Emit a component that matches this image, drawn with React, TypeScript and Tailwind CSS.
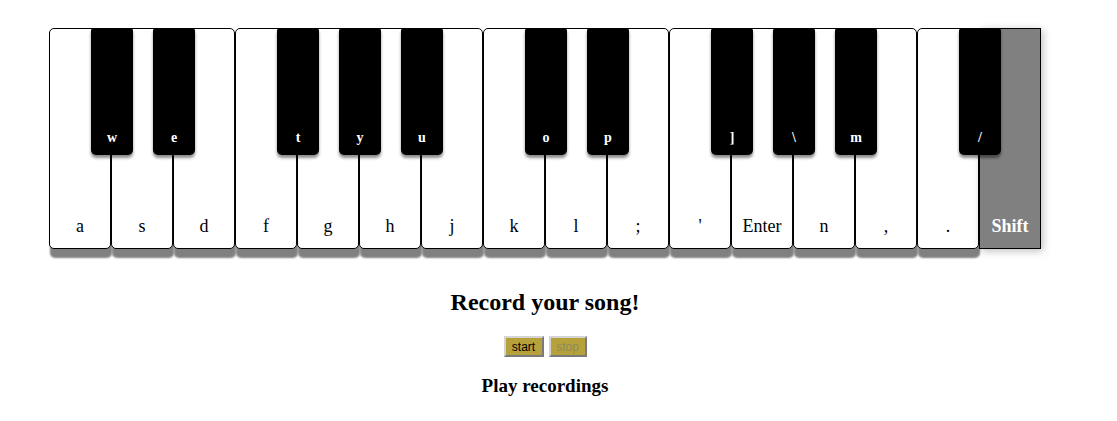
import React from 'react';

const KEY_W = 62;

const whiteKeys = ['a', 's', 'd', 'f', 'g', 'h', 'j', 'k', 'l', ';', "'", 'Enter', 'n', ',', '.'];

// black keys sit on the boundary between white key (index - 1) and index
const blackKeys: { label: string; at: number }[] = [
  { label: 'w', at: 1 },
  { label: 'e', at: 2 },
  { label: 't', at: 4 },
  { label: 'y', at: 5 },
  { label: 'u', at: 6 },
  { label: 'o', at: 8 },
  { label: 'p', at: 9 },
  { label: ']', at: 11 },
  { label: '\\', at: 12 },
  { label: 'm', at: 13 },
  { label: '/', at: 15 },
];

const App: React.FC = () => {
  return (
    <div className="min-h-screen bg-white font-['Liberation_Serif',serif] text-black">
      <div className="ml-[49px] w-[992px] pt-[28px]">
        {/* Keyboard */}
        <div className="relative flex h-[221px]">
          {whiteKeys.map((k) => (
            <div
              key={k}
              className="flex h-[221px] w-[62px] shrink-0 items-end justify-center rounded-[5px] border border-black bg-white pb-[13px] text-[18px] leading-none shadow-[1px_9px_2px_#808080]"
            >
              {k}
            </div>
          ))}
          <div className="flex h-[221px] w-[62px] shrink-0 items-end justify-center border border-black bg-[#808080] pb-[13px] text-[18px] font-bold leading-none text-white shadow-[2px_2px_8px_rgba(0,0,0,0.25)]">
            Shift
          </div>

          {/* Black keys overlay */}
          {blackKeys.map((b) => (
            <div
              key={b.label}
              className="absolute top-0 flex h-[127px] w-[42px] items-end justify-center rounded-b-[5px] rounded-t-[3px] bg-black pb-[10px] text-[14px] font-bold leading-none text-white shadow-[0_3px_3px_rgba(0,0,0,0.45)]"
              style={{ left: b.at * KEY_W - 20 }}
            >
              {b.label}
            </div>
          ))}
        </div>

        {/* Recorder */}
        <div className="flex flex-col items-center">
          <h2 className="mt-[39px] text-[24px] font-bold leading-[28px]">Record your song!</h2>
          <div className="mt-[20px] flex gap-[5px] font-['Liberation_Sans',sans-serif] text-[12px] leading-none">
            <button className="h-[21px] w-[40px] border-2 border-t-[#d4d4d4] border-l-[#d4d4d4] border-b-[#7a7a7a] border-r-[#7a7a7a] bg-[#b6a13b] text-black">
              start
            </button>
            <button
              disabled
              className="h-[21px] w-[38px] border-2 border-t-[#d4d4d4] border-l-[#d4d4d4] border-b-[#7a7a7a] border-r-[#7a7a7a] bg-[#b6a13b] text-[#8a8a62]"
            >
              stop
            </button>
          </div>
          <h3 className="mt-[18px] text-[19px] font-bold leading-[22px]">Play recordings</h3>
        </div>
      </div>
    </div>
  );
};

export default App;
